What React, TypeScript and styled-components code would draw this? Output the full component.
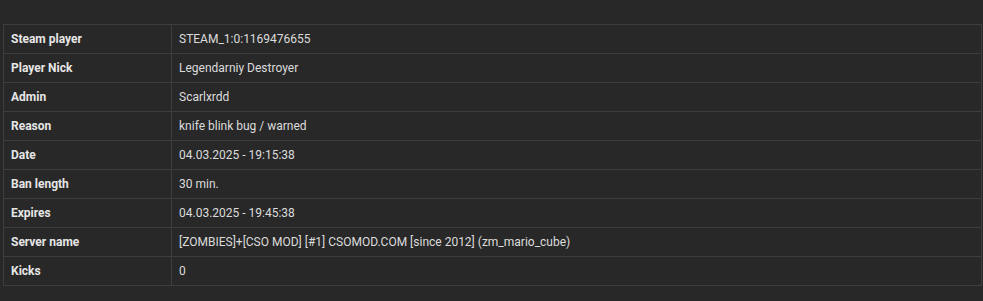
import styled, { createGlobalStyle } from "styled-components";

const GlobalStyle = createGlobalStyle`
  html, body {
    margin: 0;
    padding: 0;
    background: #282828;
  }
  body {
    font-family: Roboto, "Liberation Sans", sans-serif;
    color: #dcdcdc;
  }
`;

const Wrapper = styled.div`
  padding: 24px 1px 0 3px;
`;

const Table = styled.table`
  width: 979px;
  border-collapse: collapse;
  border: 1px solid #3d3d3d;
  font-size: 12px;
`;

const Row = styled.tr`
  height: 29px;
`;

const Cell = styled.td<{ $label?: boolean }>`
  border: 1px solid #3d3d3d;
  padding: 0 7px;
  vertical-align: middle;
  font-weight: ${(p) => (p.$label ? 700 : 400)};
  color: ${(p) => (p.$label ? "#e6e6e6" : "#dcdcdc")};
  width: ${(p) => (p.$label ? "153px" : "auto")};
  white-space: nowrap;
`;

const rows: [string, string][] = [
  ["Steam player", "STEAM_1:0:1169476655"],
  ["Player Nick", "Legendarniy Destroyer"],
  ["Admin", "Scarlxrdd"],
  ["Reason", "knife blink bug / warned"],
  ["Date", "04.03.2025 - 19:15:38"],
  ["Ban length", "30 min."],
  ["Expires", "04.03.2025 - 19:45:38"],
  ["Server name", "[ZOMBIES]+[CSO MOD] [#1] CSOMOD.COM [since 2012] (zm_mario_cube)"],
  ["Kicks", "0"],
];

function App() {
  return (
    <>
      <GlobalStyle />
      <Wrapper>
        <Table>
          <tbody>
            {rows.map(([label, value]) => (
              <Row key={label}>
                <Cell $label>{label}</Cell>
                <Cell>{value}</Cell>
              </Row>
            ))}
          </tbody>
        </Table>
      </Wrapper>
    </>
  );
}

export default App;
